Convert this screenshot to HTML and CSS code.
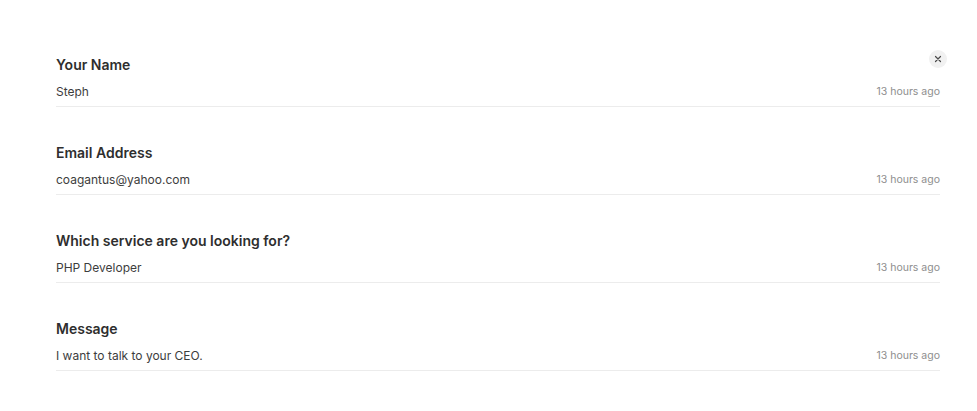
FILE: index.html
```html
<!doctype html>
<html>
<head>
<meta charset="utf-8">
<title>Submission</title>
<link rel="stylesheet" href="styles.css">
</head>
<body>
<section class="entry">
	<a class="close" href="#" title="Close">
		<svg width="8" height="8" viewBox="0 0 8 8"><path d="M1.5 1.5L6.5 6.5M6.5 1.5L1.5 6.5" stroke="#4a4a4a" stroke-width="1.2" stroke-linecap="round"/></svg>
	</a>
	<div class="field">
		<h3>Your Name</h3>
		<div class="row"><span class="val">Steph</span><span class="time">13 hours ago</span></div>
	</div>
	<div class="field">
		<h3>Email Address</h3>
		<div class="row"><span class="val">coagantus@yahoo.com</span><span class="time">13 hours ago</span></div>
	</div>
	<div class="field">
		<h3>Which service are you looking for?</h3>
		<div class="row"><span class="val">PHP Developer</span><span class="time">13 hours ago</span></div>
	</div>
	<div class="field">
		<h3>Message</h3>
		<div class="row"><span class="val">I want to talk to your CEO.</span><span class="time">13 hours ago</span></div>
	</div>
</section>
</body>
</html>
```

FILE: styles.css
```css
body{margin:0;background:#fff;font-family:Inter,"Noto Sans",sans-serif;color:#333;}
.entry{position:relative;padding:56px 37px 0 56px;}
.close{position:absolute;top:50px;right:30px;width:18px;height:18px;border-radius:50%;background:#f1f1f1;display:flex;align-items:center;justify-content:center;}
.field{margin-bottom:37px;}
.field h3{margin:0 0 10px;font-size:14px;line-height:18px;font-weight:600;color:#2e2e2e;}
.row{display:flex;justify-content:space-between;align-items:center;padding-bottom:6px;border-bottom:1px solid #ececec;}
.val{font-size:12px;line-height:16px;color:#3d3d3d;}
.time{font-size:10.5px;line-height:16px;color:#8e8e8e;}
```
